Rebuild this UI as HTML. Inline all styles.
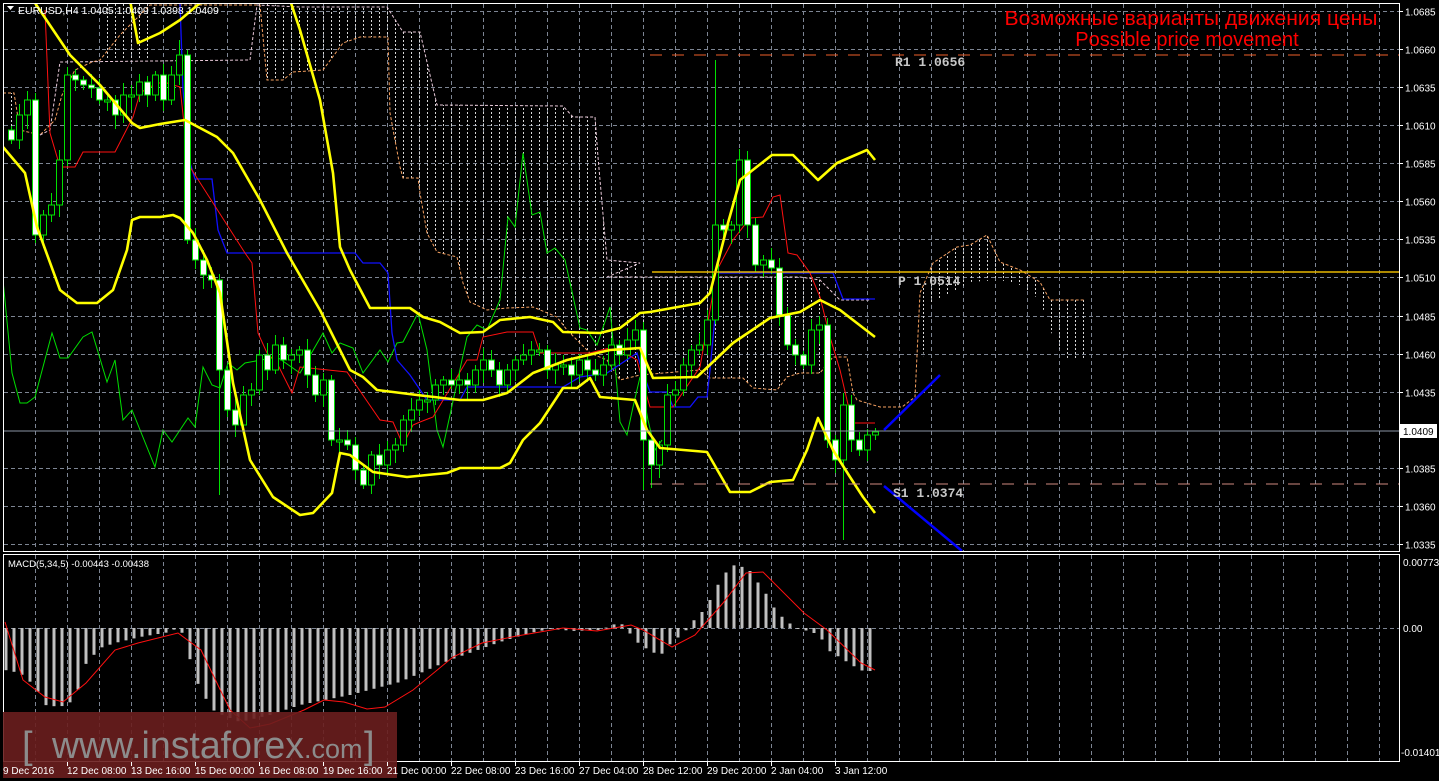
<!DOCTYPE html>
<html><head><meta charset="utf-8">
<style>
html,body{margin:0;padding:0;background:#000;}
body{width:1439px;height:781px;overflow:hidden;position:relative;font-family:"Liberation Sans",sans-serif;}
svg{position:absolute;left:0;top:0;}
</style></head>
<body>
<svg id="c" width="1439" height="781" viewBox="0 0 1439 781" xmlns="http://www.w3.org/2000/svg">
<defs>
<pattern id="hat" width="8" height="4" patternUnits="userSpaceOnUse">
<rect x="3" y="0" width="1" height="2" fill="#d8d8d8"/>
</pattern>
<clipPath id="mainclip"><rect x="4" y="4" width="1395" height="547"/></clipPath>
<clipPath id="macdclip"><rect x="4" y="555" width="1395" height="207"/></clipPath>
</defs>
<rect width="1439" height="781" fill="#000"/>
<g id="grid" stroke="#7d8593" stroke-width="1" stroke-dasharray="4,3"></g>

<g clip-path="url(#mainclip)">
<g fill="url(#hat)">
<polygon points="3,93 14,93 14,137 3,137"/>
<polygon points="105,3 155,3 155,60 105,60"/>
<polygon points="257,3 300,7 387,7 403,32 420,32 437,105 563,106 573,117 595,117 598,157 607,260 640,263 640,345 613,347 590,353 567,330 557,317 533,307 507,308 487,310 470,302 463,283 457,257 437,252 427,233 420,193 418,178 403,178 400,167 390,113 388,37 360,37 343,43 323,70 293,72 283,80 267,80"/>
<polygon points="607,277 800,277 820,280 820,373 800,373 787,377 777,390 753,388 743,378 710,378 700,370 640,375 620,380 607,360"/>
<polygon points="920,293 933,263 957,247 970,245 987,235 1000,262 1020,270 1040,282 1050,300 1085,300 1085,360 1065,360 1050,330 1040,300 1020,285 1000,280 970,282 930,305 920,380"/>
</g>
<polyline fill="none" stroke="#f5a060" stroke-width="1" stroke-dasharray="3,2" points="3,93 14,93 20,130 40,135 55,120 62,95 75,70 92,62 100,60 108,50 120,35 135,20 150,5 260,5 267,80 283,80 293,72 323,70 343,43 360,37 388,37 390,113 400,167 403,178 418,178 420,193 427,233 437,252 457,257 463,283 470,302 487,310 507,308 533,307 557,317 567,330 590,353 607,360 620,380 640,375 700,370 710,378 743,378 753,388 777,390 787,377 800,373 820,373 833,357 847,357 853,393 857,400 880,407 902,407 915,397 920,293 933,263 957,247 970,245 987,235 1000,262 1020,270 1040,282 1050,300 1085,300"/>
<polyline fill="none" stroke="#e8c8d8" stroke-width="1" stroke-dasharray="3,2" points="40,135 50,130 60,62 250,60 257,5 300,7 387,7 403,32 420,32 437,105 563,106 573,117 595,117 598,157 607,260 640,263 607,277 800,277 820,280 840,300 870,300"/>

<polyline fill="none" stroke="#00e000" stroke-width="1" points="3,280 12,373 20,403 27,403 35,397 52,333 60,358 68,358 83,337 92,332 107,382 115,360 123,420 132,410 155,467 163,430 172,442 188,418 195,427 203,367 212,385 220,388 228,363 237,370 245,363 277,357 300,373 323,333 332,353 340,343 353,348 363,373 380,350 388,362 397,343 403,342 418,313 427,350 437,430 443,447 467,337 477,325 487,330 500,300 508,217 515,227 523,153 532,215 540,212 547,253 555,248 565,260 580,328 587,330 597,345 610,307 620,422 627,435 633,407 640,377 648,420 655,450 662,440"/>
<polyline fill="none" stroke="#1010ff" stroke-width="1.3" points="180,3 183,90 190,163 195,179 212,179 218,230 227,253 355,253 363,263 380,263 388,273 392,333 397,360 410,375 427,400 460,400 467,387 563,387 580,377 607,373 637,353 642,370 650,392 667,392 673,407 690,407 698,397 707,397 710,370 715,317 718,273 833,273 843,299 875,299"/>
<polyline fill="none" stroke="#ff1010" stroke-width="1" points="45,10 50,133 60,167 75,167 83,152 115,152 133,117 140,93 157,83 167,83 180,87 185,133 190,167 245,253 252,263 258,333 267,353 277,363 292,393 300,367 347,372 380,420 393,422 403,445 413,425 420,422 433,417 457,377 467,360 477,360 483,337 507,332 533,332 540,353 590,353 613,347 637,360 643,383 650,407 673,407 700,367 717,270 733,240 750,218 763,217 773,197 780,195 788,253 797,255 810,273 820,297 830,337 840,370 850,413 853,423 875,423"/>

<g id="candles"></g>

<g fill="none" stroke="#ffff00" stroke-width="2.6" stroke-linejoin="round">
<polyline points="33,0 70,55 100,85 132,123 140,128 160,124 185,120 217,137 233,153 260,200 287,253 320,310 350,370 363,377 377,390 417,395 460,400 483,400 507,393 533,373 567,360 610,350 640,348 653,378 697,377 733,343 770,318 800,312 820,300 840,310 875,337"/>
<polyline points="130,0 138,43 160,33 180,20 200,3 290,0 300,30 320,100 333,173 340,247 350,270 370,308 410,308 423,317 440,322 460,333 483,332 500,320 530,317 553,322 563,332 600,333 620,328 640,313 650,312 700,303 710,293 728,223 740,180 772,155 793,155 818,180 837,163 867,150 875,160"/>
<polyline points="3,147 25,173 37,227 60,290 77,303 97,303 113,290 127,250 132,220 140,217 160,217 173,215 180,218 193,233 207,260 220,293 233,383 250,460 273,497 300,515 313,513 332,493 340,453 350,455 373,472 407,477 447,473 460,468 500,468 510,463 523,440 540,423 563,388 577,388 590,378 600,397 635,400 647,430 660,448 707,452 730,492 750,492 770,482 793,480 807,450 818,418 833,450 850,477 863,497 875,513"/>
</g>

<line x1="650" y1="55" x2="1399" y2="55" stroke="#f0602a" stroke-width="1" stroke-dasharray="12,10"/>
<line x1="652" y1="272" x2="1399" y2="272" stroke="#e8b800" stroke-width="1.5"/>
<line x1="650" y1="484" x2="1399" y2="484" stroke="#d08a80" stroke-width="1" stroke-dasharray="12,10"/>
<line x1="4" y1="431" x2="1399" y2="431" stroke="#8a95a5" stroke-width="1"/>
<line x1="884" y1="430" x2="940" y2="375" stroke="#0000ff" stroke-width="2.5"/>
<line x1="884" y1="486" x2="962" y2="551" stroke="#0000ff" stroke-width="2.5"/>
<g font-family="Liberation Mono,monospace" font-size="13" font-weight="bold" fill="#c8c8c8">
<text x="895" y="66">R1 1.0656</text>
<text x="898" y="285">P 1.0514</text>
<text x="893" y="497">S1 1.0374</text>
</g>
</g>

<g clip-path="url(#macdclip)">
<g id="macd"></g>
<polyline fill="none" stroke="#ff1010" stroke-width="1" points="5,622 23,680 45,697 63,702 86,683 115,650 138,643 178,633 201,650 230,710 250,728 270,724 304,710 324,700 344,702 367,709 385,707 413,690 453,657 482,643 517,636 563,628 597,631 631,625 643,630 672,647 695,635 723,603 746,573 763,572 804,613 827,630 861,663 875,670"/>
</g>

<g fill="none" stroke="#fff" stroke-width="1">
<rect x="3.5" y="3.5" width="1396" height="548"/>
<rect x="3.5" y="554.5" width="1396" height="207"/>
</g>

<rect x="3" y="712" width="394" height="66" fill="#6a1e1e" fill-opacity="0.9"/>
<text x="22" y="758" font-family="Liberation Sans,sans-serif" font-size="38" fill="#8c8c8c">[</text>
<text x="52" y="758" font-family="Liberation Sans,sans-serif" font-size="38" fill="#8c8c8c" textLength="252" lengthAdjust="spacingAndGlyphs">www.instaforex</text>
<text x="304" y="758" font-family="Liberation Sans,sans-serif" font-size="27" fill="#8c8c8c">.com</text>
<text x="364" y="758" font-family="Liberation Sans,sans-serif" font-size="38" fill="#8c8c8c">]</text>

<path d="M7,6 L14,6 L10.5,10 Z" fill="#fff"/>
<text x="18" y="14" font-size="10.5" fill="#fff">EURUSD,H4  1.0405 1.0409 1.0398 1.0409</text>
<text x="1191" y="25" font-size="20" fill="#ff0000" text-anchor="middle" textLength="373" lengthAdjust="spacingAndGlyphs">Возможные варианты движения цены</text>
<text x="1187" y="46" font-size="20" fill="#ff0000" text-anchor="middle">Possible price movement</text>
<text x="8" y="567" font-size="9.5" fill="#fff">MACD(5,34,5) -0.00443 -0.00438</text>

<g id="paxis" font-size="10" fill="#fff"></g>
<rect x="1400" y="424" width="37" height="14" fill="#fff"/>
<text x="1403" y="435" font-size="10" fill="#000">1.0409</text>
<g font-size="10" fill="#fff">
<text x="1403" y="566">0.00773</text>
<text x="1403" y="632">0.00</text>
<text x="1401" y="756">-0.01401</text>
</g>
<g id="taxis" font-size="10" fill="#fff"></g>
</svg>
<script>
(function(){
var NS="http://www.w3.org/2000/svg";
function el(p,t,a,txt){var e=document.createElementNS(NS,t);for(var k in a)e.setAttribute(k,a[k]);if(txt)e.textContent=txt;document.getElementById(p).appendChild(e);return e;}
var levels=["1.0685","1.0660","1.0635","1.0610","1.0585","1.0560","1.0535","1.0510","1.0485","1.0460","1.0435","1.0409","1.0385","1.0360","1.0335"];
for(var i=0;i<15;i++){var y=Math.round(11+i*38.07)+0.5;
 if(i!=11){el("grid","line",{x1:4,y1:y,x2:1399,y2:y});
 el("paxis","line",{x1:1399,y1:y,x2:1403,y2:y,stroke:"#fff"});
 el("paxis","text",{x:1405,y:y+4},levels[i]);}}
el("grid","line",{x1:4,y1:628.5,x2:1399,y2:628.5});
for(var x=35;x<1399;x+=32){el("grid","line",{x1:x+0.5,y1:4,x2:x+0.5,y2:551});el("grid","line",{x1:x+0.5,y1:555,x2:x+0.5,y2:762});}
var dates=["9 Dec 2016","12 Dec 08:00","13 Dec 16:00","15 Dec 00:00","16 Dec 08:00","19 Dec 16:00","21 Dec 00:00","22 Dec 08:00","23 Dec 16:00","27 Dec 04:00","28 Dec 12:00","29 Dec 20:00","2 Jan 04:00","3 Jan 12:00"];
for(var i=0;i<dates.length;i++){var x=(i==0?3:67+64*(i-1));el("taxis","text",{x:x,y:774},dates[i]);if(i>0)el("taxis","line",{x1:x+0.5,y1:762,x2:x+0.5,y2:766,stroke:"#fff"});}
var C=[140,115,100,235,215,205,160,75,80,85,88,100,100,115,95,95,82,95,75,100,75,55,240,260,275,280,370,410,425,395,390,355,370,345,360,355,350,375,395,380,440,440,445,470,485,455,465,450,445,420,410,400,400,385,380,385,380,385,370,360,370,385,370,360,355,350,350,370,365,365,375,360,370,375,365,345,355,340,330,440,465,445,395,390,365,350,345,320,225,230,225,160,225,265,260,268,315,345,355,365,330,325,440,460,405,440,450,435,432];
var spec={88:[60,0],104:[0,540],22:[50,0],26:[0,495],21:[40,0],79:[0,490],80:[0,488]};
var prev=130;
for(var i=0;i<C.length;i++){var cx=11+8*i,o=prev,c=C[i];prev=c;
 var bt=Math.min(o,c),bb=Math.max(o,c);if(bb-bt<2){bb=bt+2;}
 var r1=4+((i*7)%9),r2=4+((i*5)%11);var hi=bt-r1,lo=bb+r2;
 if(spec[i]){if(spec[i][0])hi=spec[i][0];if(spec[i][1])lo=spec[i][1];}
 el("candles","line",{x1:cx+0.5,y1:hi,x2:cx+0.5,y2:lo,stroke:"#00e000","stroke-width":1});
 el("candles","rect",{x:cx-2.5,y:bt,width:6,height:bb-bt,fill:(c>o?"#fff":"#000"),stroke:"#00e000","stroke-width":1});}
var K=[[5,670],[20,673],[35,686],[45,705],[60,707],[75,700],[85,665],[100,648],[115,643],[140,637],[170,632],[180,626],[188,653],[200,690],[215,712],[240,722],[270,715],[300,705],[350,695],[400,682],[450,660],[500,642],[530,633],[550,629],[575,631],[600,630],[620,622],[640,645],[660,656],[672,642],[684,633],[692,622],[700,615],[710,600],[716,588],[724,575],[732,565],[748,568],[756,580],[764,590],[772,605],[780,615],[788,622],[796,628],[812,632],[820,636],[828,650],[844,660],[860,670],[868,672],[876,668]];
function iv(x){for(var j=1;j<K.length;j++){if(x<=K[j][0]){var a=K[j-1],b=K[j];return a[1]+(b[1]-a[1])*(x-a[0])/(b[0]-a[0]);}}return K[K.length-1][1];}
for(var i=0;i<109;i++){var x=11+8*i-5;var v=iv(x);var y1=Math.min(v,628),y2=Math.max(v,628);
 el("macd","rect",{x:x-1.5,y:y1,width:3,height:Math.max(1,y2-y1),fill:"#c0c0c0"});}
})();
</script>
</body></html>
